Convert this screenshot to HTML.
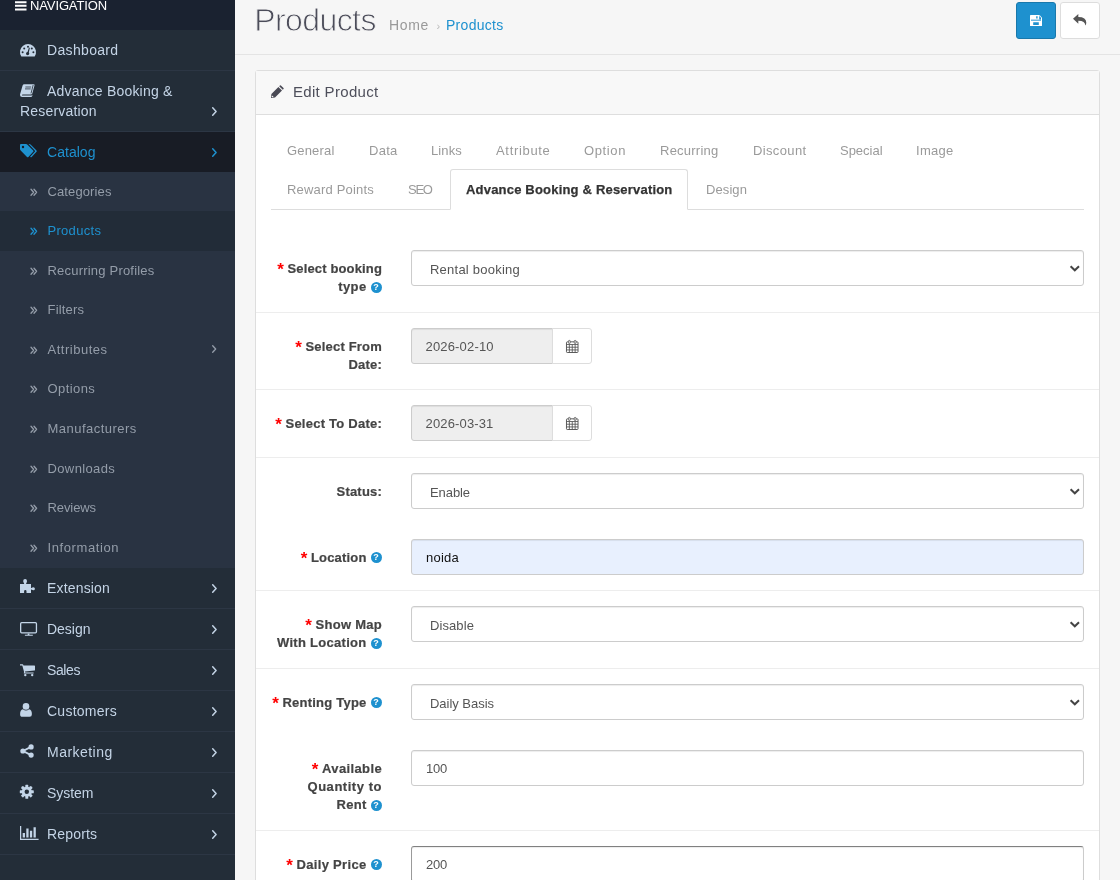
<!DOCTYPE html>
<html><head><meta charset="utf-8"><title>Products</title>
<style>
*{box-sizing:border-box;margin:0;padding:0}
html,body{width:1120px;height:880px;overflow:hidden;background:#f6f6f6;font-family:"Liberation Sans",sans-serif;font-size:13px;color:#666}
#side{position:absolute;left:0;top:0;width:235px;height:880px;background:#232d38;overflow:hidden}
#nav{position:absolute;left:0;top:0;width:235px;height:30px;background:#1a2230}
.mi{position:absolute;left:0;width:235px;border-bottom:1px solid #2c3644}
.act{background:#181c25;border-bottom-color:#181c25}
.sub{position:absolute;left:0;width:235px;background:#293342}
.subact{position:absolute;left:0;width:235px;background:#222c38}
svg{position:absolute;overflow:visible}
#wrap{position:absolute;left:0;top:0;width:1120px;height:880px;overflow:hidden;will-change:transform}
.abs{position:absolute}
.inp{position:absolute;border:1px solid #ccc;border-radius:3px;background:#fff;box-shadow:inset 0 1px 1px rgba(0,0,0,.075)}
.sep{position:absolute;left:256px;width:843px;height:1px;background:#ededed}
</style></head>
<body>
<div id="wrap">
<div id="side">
<div id="nav"></div>
<svg style="left:15px;top:0.5px" width="12" height="10" viewBox="0 0 12 10"><path d="M0 0.2h11.5v2H0zM0 3.8h11.5v2H0zM0 7.4h11.5v2H0z" fill="#fff"/></svg>
<div style="position:absolute;left:30px;top:-1.7px;font-size:13px;line-height:15px;color:#fff;font-weight:normal;white-space:nowrap;"><span style="letter-spacing:-0.125px;">NAVIGATION</span></div>
<div class="mi " style="top:30px;height:41px"></div>
<svg style="left:20px;top:43.6px" width="16" height="13" viewBox="0 0 16 13"><path d="M1.2 12.3 A8 8 0 1 1 14.8 12.3 Q14.6 12.6 14.2 12.6 H1.8 Q1.4 12.6 1.2 12.3Z" fill="#c3d5e8"/><g fill="#232d38"><circle cx="2.6" cy="8.2" r="1"/><circle cx="4.2" cy="4.4" r="1"/><circle cx="8" cy="2.8" r="1"/><circle cx="11.8" cy="4.4" r="1"/><circle cx="13.4" cy="8.2" r="1"/><circle cx="7.6" cy="9.6" r="1.6"/><path d="M7.2 9 L9 3.6 L9.8 3.9 L8.6 9.6Z"/></g></svg>
<div style="position:absolute;left:47px;top:42px;font-size:14px;line-height:16px;color:#c4d4e6;font-weight:normal;white-space:nowrap;"><span style="letter-spacing:0.333px;">Dashboard</span></div>
<div class="mi " style="top:71px;height:61px"></div>
<svg style="left:20px;top:84px" width="15" height="13" viewBox="0 0 15 13"><path d="M4.2 0.2 H13.6 Q14.9 0.2 14.5 1.6 L12.3 9.4 Q12 10.4 11 10.4 H2.8 Q1.9 10.4 1.9 11 Q1.9 11.6 2.8 11.6 H11.6 L12.6 10.6 L12.1 12.2 Q11.9 13 11 13 H2.2 Q0 13 0 10.9 Q0 10.3 0.3 9.5 L2.6 1.4 Q3 0.2 4.2 0.2Z" fill="#c3d5e8"/><path d="M5.4 3 H11.2 M5 4.9 H10.7 M13.2 0.9 L11 9.4" stroke="#232d38" stroke-width="0.8" fill="none"/></svg>
<div style="position:absolute;left:47px;top:82.7px;font-size:14px;line-height:16px;color:#c4d4e6;font-weight:normal;white-space:nowrap;"><span style="letter-spacing:0.194px;">Advance Booking &amp;</span></div>
<div style="position:absolute;left:20px;top:103px;font-size:14px;line-height:16px;color:#c4d4e6;font-weight:normal;white-space:nowrap;"><span style="letter-spacing:0.182px;">Reservation</span></div>
<svg style="left:212px;top:106.5px" width="5" height="9" viewBox="0 0 5 9"><path d="M0.7 0.7 L4.1 4.5 L0.7 8.3" fill="none" stroke="#c4d4e6" stroke-width="1.5" stroke-linecap="round" stroke-linejoin="round"/></svg>
<div class="mi act" style="top:132px;height:40px;border:0"></div>
<svg style="left:20px;top:144px" width="17" height="14" viewBox="0 0 17 14"><path d="M0 1 Q0 0 1 0 H6 Q6.8 0 7.5 0.7 L13.2 6.4 Q13.9 7.1 13.2 7.8 L8.4 12.9 Q7.7 13.6 7 12.9 L0.7 6.6 Q0 5.9 0 5Z" fill="#1e91cf"/><path d="M8.6 0 H9.3 Q10.1 0 10.8 0.7 L16.5 6.4 Q17.2 7.1 16.5 7.8 L11.7 12.9 Q11 13.6 10.3 12.9 L10.1 12.7 L14.7 7.8 Q15.4 7.1 14.7 6.4Z" fill="#1e91cf"/><circle cx="3" cy="3" r="1.2" fill="#181c25"/></svg>
<div style="position:absolute;left:47px;top:144px;font-size:14px;line-height:16px;color:#1e91cf;font-weight:normal;white-space:nowrap;"><span style="letter-spacing:0.033px;">Catalog</span></div>
<svg style="left:212px;top:147.5px" width="5" height="9" viewBox="0 0 5 9"><path d="M0.7 0.7 L4.1 4.5 L0.7 8.3" fill="none" stroke="#1e91cf" stroke-width="1.5" stroke-linecap="round" stroke-linejoin="round"/></svg>
<div class="sub" style="top:172px;height:396px"></div>
<div class="subact" style="top:211px;height:40px"></div>
<svg style="left:29.7px;top:187.8px" width="8" height="8" viewBox="0 0 8 8"><path d="M1 1.2 L3.6 4.2 L1 7.2 M4 1.2 L6.6 4.2 L4 7.2" fill="none" stroke="#949da9" stroke-width="1.3" stroke-linecap="round" stroke-linejoin="round"/></svg>
<div style="position:absolute;left:47.5px;top:184px;font-size:13px;line-height:15px;color:#949da9;font-weight:normal;white-space:nowrap;"><span style="letter-spacing:0.113px;">Categories</span></div>
<svg style="left:29.7px;top:226.8px" width="8" height="8" viewBox="0 0 8 8"><path d="M1 1.2 L3.6 4.2 L1 7.2 M4 1.2 L6.6 4.2 L4 7.2" fill="none" stroke="#1e91cf" stroke-width="1.3" stroke-linecap="round" stroke-linejoin="round"/></svg>
<div style="position:absolute;left:47.5px;top:223px;font-size:13px;line-height:15px;color:#1e91cf;font-weight:normal;white-space:nowrap;"><span style="letter-spacing:0.298px;">Products</span></div>
<svg style="left:29.7px;top:266.8px" width="8" height="8" viewBox="0 0 8 8"><path d="M1 1.2 L3.6 4.2 L1 7.2 M4 1.2 L6.6 4.2 L4 7.2" fill="none" stroke="#949da9" stroke-width="1.3" stroke-linecap="round" stroke-linejoin="round"/></svg>
<div style="position:absolute;left:47.5px;top:263px;font-size:13px;line-height:15px;color:#949da9;font-weight:normal;white-space:nowrap;"><span style="letter-spacing:0.204px;">Recurring Profiles</span></div>
<svg style="left:29.7px;top:305.8px" width="8" height="8" viewBox="0 0 8 8"><path d="M1 1.2 L3.6 4.2 L1 7.2 M4 1.2 L6.6 4.2 L4 7.2" fill="none" stroke="#949da9" stroke-width="1.3" stroke-linecap="round" stroke-linejoin="round"/></svg>
<div style="position:absolute;left:47.5px;top:302px;font-size:13px;line-height:15px;color:#949da9;font-weight:normal;white-space:nowrap;"><span style="letter-spacing:0.187px;">Filters</span></div>
<svg style="left:29.7px;top:345.8px" width="8" height="8" viewBox="0 0 8 8"><path d="M1 1.2 L3.6 4.2 L1 7.2 M4 1.2 L6.6 4.2 L4 7.2" fill="none" stroke="#949da9" stroke-width="1.3" stroke-linecap="round" stroke-linejoin="round"/></svg>
<div style="position:absolute;left:47.5px;top:342px;font-size:13px;line-height:15px;color:#949da9;font-weight:normal;white-space:nowrap;"><span style="letter-spacing:0.508px;">Attributes</span></div>
<svg style="left:29.7px;top:384.8px" width="8" height="8" viewBox="0 0 8 8"><path d="M1 1.2 L3.6 4.2 L1 7.2 M4 1.2 L6.6 4.2 L4 7.2" fill="none" stroke="#949da9" stroke-width="1.3" stroke-linecap="round" stroke-linejoin="round"/></svg>
<div style="position:absolute;left:47.5px;top:381px;font-size:13px;line-height:15px;color:#949da9;font-weight:normal;white-space:nowrap;"><span style="letter-spacing:0.413px;">Options</span></div>
<svg style="left:29.7px;top:424.8px" width="8" height="8" viewBox="0 0 8 8"><path d="M1 1.2 L3.6 4.2 L1 7.2 M4 1.2 L6.6 4.2 L4 7.2" fill="none" stroke="#949da9" stroke-width="1.3" stroke-linecap="round" stroke-linejoin="round"/></svg>
<div style="position:absolute;left:47.5px;top:421px;font-size:13px;line-height:15px;color:#949da9;font-weight:normal;white-space:nowrap;"><span style="letter-spacing:0.470px;">Manufacturers</span></div>
<svg style="left:29.7px;top:464.8px" width="8" height="8" viewBox="0 0 8 8"><path d="M1 1.2 L3.6 4.2 L1 7.2 M4 1.2 L6.6 4.2 L4 7.2" fill="none" stroke="#949da9" stroke-width="1.3" stroke-linecap="round" stroke-linejoin="round"/></svg>
<div style="position:absolute;left:47.5px;top:461px;font-size:13px;line-height:15px;color:#949da9;font-weight:normal;white-space:nowrap;"><span style="letter-spacing:0.375px;">Downloads</span></div>
<svg style="left:29.7px;top:503.8px" width="8" height="8" viewBox="0 0 8 8"><path d="M1 1.2 L3.6 4.2 L1 7.2 M4 1.2 L6.6 4.2 L4 7.2" fill="none" stroke="#949da9" stroke-width="1.3" stroke-linecap="round" stroke-linejoin="round"/></svg>
<div style="position:absolute;left:47.5px;top:500px;font-size:13px;line-height:15px;color:#949da9;font-weight:normal;white-space:nowrap;"><span style="letter-spacing:-0.089px;">Reviews</span></div>
<svg style="left:29.7px;top:543.8px" width="8" height="8" viewBox="0 0 8 8"><path d="M1 1.2 L3.6 4.2 L1 7.2 M4 1.2 L6.6 4.2 L4 7.2" fill="none" stroke="#949da9" stroke-width="1.3" stroke-linecap="round" stroke-linejoin="round"/></svg>
<div style="position:absolute;left:47.5px;top:540px;font-size:13px;line-height:15px;color:#949da9;font-weight:normal;white-space:nowrap;"><span style="letter-spacing:0.605px;">Information</span></div>
<svg style="left:212.3px;top:344.7px" width="4.6" height="8" viewBox="0 0 4.6 8"><path d="M0.7 0.7 L3.7 4 L0.7 7.3" fill="none" stroke="#949da9" stroke-width="1.3" stroke-linecap="round" stroke-linejoin="round"/></svg>
<div class="mi " style="top:568px;height:41px"></div>
<div style="position:absolute;left:47px;top:580px;font-size:14px;line-height:16px;color:#c4d4e6;font-weight:normal;white-space:nowrap;"><span style="letter-spacing:0.168px;">Extension</span></div>
<svg style="left:212px;top:583.5px" width="5" height="9" viewBox="0 0 5 9"><path d="M0.7 0.7 L4.1 4.5 L0.7 8.3" fill="none" stroke="#c4d4e6" stroke-width="1.5" stroke-linecap="round" stroke-linejoin="round"/></svg>
<div class="mi " style="top:609px;height:41px"></div>
<div style="position:absolute;left:47px;top:621px;font-size:14px;line-height:16px;color:#c4d4e6;font-weight:normal;white-space:nowrap;"><span style="letter-spacing:-0.016px;">Design</span></div>
<svg style="left:212px;top:624.5px" width="5" height="9" viewBox="0 0 5 9"><path d="M0.7 0.7 L4.1 4.5 L0.7 8.3" fill="none" stroke="#c4d4e6" stroke-width="1.5" stroke-linecap="round" stroke-linejoin="round"/></svg>
<div class="mi " style="top:650px;height:41px"></div>
<div style="position:absolute;left:47px;top:662px;font-size:14px;line-height:16px;color:#c4d4e6;font-weight:normal;white-space:nowrap;"><span style="letter-spacing:-0.406px;">Sales</span></div>
<svg style="left:212px;top:665.5px" width="5" height="9" viewBox="0 0 5 9"><path d="M0.7 0.7 L4.1 4.5 L0.7 8.3" fill="none" stroke="#c4d4e6" stroke-width="1.5" stroke-linecap="round" stroke-linejoin="round"/></svg>
<div class="mi " style="top:691px;height:41px"></div>
<div style="position:absolute;left:47px;top:703px;font-size:14px;line-height:16px;color:#c4d4e6;font-weight:normal;white-space:nowrap;"><span style="letter-spacing:0.257px;">Customers</span></div>
<svg style="left:212px;top:706.5px" width="5" height="9" viewBox="0 0 5 9"><path d="M0.7 0.7 L4.1 4.5 L0.7 8.3" fill="none" stroke="#c4d4e6" stroke-width="1.5" stroke-linecap="round" stroke-linejoin="round"/></svg>
<div class="mi " style="top:732px;height:41px"></div>
<div style="position:absolute;left:47px;top:744px;font-size:14px;line-height:16px;color:#c4d4e6;font-weight:normal;white-space:nowrap;"><span style="letter-spacing:0.470px;">Marketing</span></div>
<svg style="left:212px;top:747.5px" width="5" height="9" viewBox="0 0 5 9"><path d="M0.7 0.7 L4.1 4.5 L0.7 8.3" fill="none" stroke="#c4d4e6" stroke-width="1.5" stroke-linecap="round" stroke-linejoin="round"/></svg>
<div class="mi " style="top:773px;height:41px"></div>
<div style="position:absolute;left:47px;top:785px;font-size:14px;line-height:16px;color:#c4d4e6;font-weight:normal;white-space:nowrap;"><span style="letter-spacing:-0.031px;">System</span></div>
<svg style="left:212px;top:788.5px" width="5" height="9" viewBox="0 0 5 9"><path d="M0.7 0.7 L4.1 4.5 L0.7 8.3" fill="none" stroke="#c4d4e6" stroke-width="1.5" stroke-linecap="round" stroke-linejoin="round"/></svg>
<div class="mi " style="top:814px;height:41px"></div>
<div style="position:absolute;left:47px;top:826px;font-size:14px;line-height:16px;color:#c4d4e6;font-weight:normal;white-space:nowrap;"><span style="letter-spacing:0.167px;">Reports</span></div>
<svg style="left:212px;top:829.5px" width="5" height="9" viewBox="0 0 5 9"><path d="M0.7 0.7 L4.1 4.5 L0.7 8.3" fill="none" stroke="#c4d4e6" stroke-width="1.5" stroke-linecap="round" stroke-linejoin="round"/></svg>
<svg style="left:20px;top:579px" width="15" height="14" viewBox="0 0 15 14"><path d="M0 5 H3.9 Q4.3 5 4.1 4.2 Q3.2 3.2 3.2 2 A1.9 1.9 0 0 1 7 2 Q7 3.2 6.2 4.2 Q6 5 6.4 5 H11 V8.6 Q11 9.2 11.6 9.1 Q12.2 8.3 13.4 8.3 A1.5 1.5 0 0 1 13.4 11.3 Q12.2 11.3 11.6 10.5 Q11 10.4 11 11 V14 H6.5 V12.2 A1.2 1.2 0 0 0 4.1 12.2 V14 H0Z" fill="#c3d5e8"/></svg>
<svg style="left:20px;top:621.5px" width="18" height="14" viewBox="0 0 18 14"><rect x="0.65" y="0.65" width="15.8" height="10.2" rx="1" fill="none" stroke="#c3d5e8" stroke-width="1.3"/><path d="M7.7 11.4 H9.4 V12.7 H12.8 V13.7 H4.9 V12.7 H7.7Z" fill="#c3d5e8"/></svg>
<svg style="left:20px;top:663.5px" width="15" height="13" viewBox="0 0 15 13"><path d="M0 0.3 H2.6 Q3.2 0.3 3.3 0.9 L3.5 1.5 H14.4 Q15 1.5 15 2.1 V6 Q15 6.5 14.4 6.6 L5 7.6 L5.2 8.4 H13.6 V9.5 H4.2 Q3.7 9.5 3.8 8.9 L4.1 8 L2.3 1.4 H0Z" fill="#c3d5e8"/><circle cx="5.3" cy="11.1" r="1.2" fill="#c3d5e8"/><circle cx="12.2" cy="11.1" r="1.2" fill="#c3d5e8"/></svg>
<svg style="left:20px;top:703.1px" width="12" height="14" viewBox="0 0 12 14"><circle cx="6" cy="3.4" r="3.3" fill="#c3d5e8"/><path d="M2.9 6.2 Q6 8.6 9.1 6.2 Q11.9 6.6 11.9 11.2 Q11.9 13.8 9.6 13.8 H2.4 Q0.1 13.8 0.1 11.2 Q0.1 6.6 2.9 6.2Z" fill="#c3d5e8"/></svg>
<svg style="left:20px;top:744.2px" width="14" height="14" viewBox="0 0 14 14"><path d="M3 7 L11 2.8 M3 7 L11 11.2" stroke="#c3d5e8" stroke-width="1.9" fill="none"/><circle cx="2.9" cy="7" r="2.6" fill="#c3d5e8"/><circle cx="11.1" cy="2.9" r="2.6" fill="#c3d5e8"/><circle cx="11.1" cy="11.1" r="2.6" fill="#c3d5e8"/></svg>
<svg style="left:20px;top:785.3px" width="13.6" height="13.6" viewBox="0 0 14 14"><rect x="5.5" y="-0.2" width="3" height="14.4" rx="0.6" transform="rotate(0 7 7)" fill="#c3d5e8"/><rect x="5.5" y="-0.2" width="3" height="14.4" rx="0.6" transform="rotate(45 7 7)" fill="#c3d5e8"/><rect x="5.5" y="-0.2" width="3" height="14.4" rx="0.6" transform="rotate(90 7 7)" fill="#c3d5e8"/><rect x="5.5" y="-0.2" width="3" height="14.4" rx="0.6" transform="rotate(135 7 7)" fill="#c3d5e8"/><circle cx="7" cy="7" r="5.2" fill="#c3d5e8"/><circle cx="7" cy="7" r="2.3" fill="#232d38"/></svg>
<svg style="left:20px;top:826.2px" width="18.6" height="14" viewBox="0 0 18 14" preserveAspectRatio="none"><path d="M0 0 H1.2 V12.8 H18 V14 H0Z M2.6 7 H4.8 V11.6 H2.6Z M6.1 2.4 H8.3 V11.6 H6.1Z M9.6 4.8 H11.8 V11.6 H9.6Z M13.1 1.2 H15.3 V11.6 H13.1Z" fill="#c3d5e8"/></svg>
</div>
<div class="abs" style="left:235px;top:54px;width:885px;height:1px;background:#e4e4e4"></div>
<div style="position:absolute;left:254.3px;top:1.9px;font-size:32px;line-height:36px;color:#4c4d5a;font-weight:normal;white-space:nowrap;-webkit-text-stroke:0.9px #f6f6f6;"><span style="letter-spacing:-0.598px;">Products</span></div>
<div style="position:absolute;left:389px;top:16.7px;font-size:14px;line-height:16px;color:#999;font-weight:normal;white-space:nowrap;"><span style="letter-spacing:0.660px;">Home</span></div>
<div style="position:absolute;left:436.5px;top:19.7px;font-size:11px;line-height:12px;color:#bbb;font-weight:normal;white-space:nowrap;"><span>›</span></div>
<div style="position:absolute;left:446px;top:16.7px;font-size:14px;line-height:16px;color:#1e91cf;font-weight:normal;white-space:nowrap;"><span style="letter-spacing:0.281px;">Products</span></div>
<div class="abs" style="left:1016px;top:2px;width:40px;height:37px;background:#1e91cf;border:1px solid #1978ab;border-radius:3px"></div>
<svg style="left:1030px;top:15.1px" width="12" height="11" viewBox="0 0 12 11" preserveAspectRatio="none"><path d="M0.6 0 H9 Q9.4 0 9.8 0.4 L11.6 2.2 Q12 2.6 12 3 V10.4 Q12 11 11.4 11 H0.6 Q0 11 0 10.4 V0.6 Q0 0 0.6 0Z" fill="#fff"/><path d="M6.2 1.2 H7.6 V3.6 H6.2Z M3.2 7.2 H8.8 V10 H3.2Z M9.2 1 H9.3 L11 2.7 V4.5 H9.2Z" fill="#1e91cf"/><path d="M1 4.5 H11 V6 H1Z" fill="#1e91cf" opacity="0.65"/></svg>
<div class="abs" style="left:1060px;top:2px;width:40px;height:37px;background:#fff;border:1px solid #ddd;border-radius:3px"></div>
<svg style="left:1073.1px;top:14.4px" width="13.3" height="11.6" viewBox="0 0 14 12" preserveAspectRatio="none"><path d="M5.6 0 V3 Q14 3 14 9 Q14 10.6 12.9 12 Q13 7 5.6 7 V10 L0 5Z" fill="#555"/></svg>
<div class="abs" style="left:255px;top:70px;width:845px;height:830px;background:#fff;border:1px solid #dedede;border-radius:3px"></div>
<div class="abs" style="left:256px;top:71px;width:843px;height:44px;background:#f8f8f8;border-bottom:1px solid #dedede"></div>
<svg style="left:271px;top:84.5px" width="13" height="13" viewBox="0 0 13 13"><path d="M0 13 L0.4 9 L7.4 2 L11 5.6 L4 12.6Z M8.2 1.2 L8.9 0.5 Q9.4 0 9.9 0.5 L12.5 3.1 Q13 3.6 12.5 4.1 L11.8 4.8Z" fill="#4a4a55"/><circle cx="1.5" cy="11.5" r="0.8" fill="#f8f8f8"/></svg>
<div style="position:absolute;left:293px;top:82.7px;font-size:15px;line-height:17px;color:#4e4f5b;font-weight:normal;white-space:nowrap;"><span style="letter-spacing:0.315px;">Edit Product</span></div>
<div style="position:absolute;left:287px;top:142.7px;font-size:13px;line-height:15px;color:#9a9a9a;font-weight:normal;white-space:nowrap;"><span style="letter-spacing:0.179px;">General</span></div>
<div style="position:absolute;left:369px;top:142.7px;font-size:13px;line-height:15px;color:#9a9a9a;font-weight:normal;white-space:nowrap;"><span style="letter-spacing:0.258px;">Data</span></div>
<div style="position:absolute;left:431px;top:142.7px;font-size:13px;line-height:15px;color:#9a9a9a;font-weight:normal;white-space:nowrap;"><span style="letter-spacing:0.128px;">Links</span></div>
<div style="position:absolute;left:496px;top:142.7px;font-size:13px;line-height:15px;color:#9a9a9a;font-weight:normal;white-space:nowrap;"><span style="letter-spacing:0.675px;">Attribute</span></div>
<div style="position:absolute;left:584px;top:142.7px;font-size:13px;line-height:15px;color:#9a9a9a;font-weight:normal;white-space:nowrap;"><span style="letter-spacing:0.615px;">Option</span></div>
<div style="position:absolute;left:660px;top:142.7px;font-size:13px;line-height:15px;color:#9a9a9a;font-weight:normal;white-space:nowrap;"><span style="letter-spacing:0.238px;">Recurring</span></div>
<div style="position:absolute;left:753px;top:142.7px;font-size:13px;line-height:15px;color:#9a9a9a;font-weight:normal;white-space:nowrap;"><span style="letter-spacing:0.365px;">Discount</span></div>
<div style="position:absolute;left:840px;top:142.7px;font-size:13px;line-height:15px;color:#9a9a9a;font-weight:normal;white-space:nowrap;"><span style="letter-spacing:-0.020px;">Special</span></div>
<div style="position:absolute;left:916px;top:142.7px;font-size:13px;line-height:15px;color:#9a9a9a;font-weight:normal;white-space:nowrap;"><span style="letter-spacing:0.272px;">Image</span></div>
<div style="position:absolute;left:287px;top:181.7px;font-size:13px;line-height:15px;color:#9a9a9a;font-weight:normal;white-space:nowrap;"><span style="letter-spacing:0.189px;">Reward Points</span></div>
<div style="position:absolute;left:408px;top:181.7px;font-size:13px;line-height:15px;color:#9a9a9a;font-weight:normal;white-space:nowrap;"><span style="letter-spacing:-1.256px;">SEO</span></div>
<div style="position:absolute;left:706px;top:181.7px;font-size:13px;line-height:15px;color:#9a9a9a;font-weight:normal;white-space:nowrap;"><span style="letter-spacing:0.089px;">Design</span></div>
<div class="abs" style="left:271px;top:209px;width:813px;height:1px;background:#ddd"></div>
<div class="abs" style="left:450px;top:169px;width:238px;height:41px;background:#fff;border:1px solid #ddd;border-bottom-color:#fff;border-radius:3px 3px 0 0"></div>
<div style="position:absolute;left:466px;top:181.7px;font-size:13px;line-height:15px;color:#333;font-weight:bold;white-space:nowrap;-webkit-text-stroke:0.25px #333;"><span style="letter-spacing:0.196px;">Advance Booking &amp; Reservation</span></div>
<div style="position:absolute;right:738px;top:260.6px;font-size:13px;line-height:15px;color:#444;font-weight:bold;white-space:nowrap;-webkit-text-stroke:0.2px #444"><span style="color:#f00;font-size:17px;line-height:0;position:relative;top:2px;-webkit-text-stroke:0;margin-right:3.7px;vertical-align:baseline">*</span><span style="letter-spacing:0.145px;">Select booking</span></div><div style="position:absolute;right:753.5px;top:279px;font-size:13px;line-height:15px;color:#444;font-weight:bold;white-space:nowrap;-webkit-text-stroke:0.2px #444"><span style="letter-spacing:0.391px;">type</span></div><div style="position:absolute;left:370.5px;top:281.5px;width:11px;height:11px;border-radius:50%;background:#1e91cf;color:#fff;font-size:9px;font-weight:bold;line-height:11px;text-align:center">?</div>
<div class="inp" style="left:411px;top:250px;width:673px;height:36px;background:#fff;border-radius:3px;"></div>
<div style="position:absolute;left:430px;top:261.7px;font-size:13px;line-height:15px;color:#555;font-weight:normal;white-space:nowrap;"><span style="letter-spacing:0.233px;">Rental booking</span></div>
<svg style="left:1069px;top:264.5px" width="11" height="7" viewBox="0 0 11 7"><path d="M1.6 1.3 L5.8 5.3 L10 1.3" fill="none" stroke="#444" stroke-width="2"/></svg>
<div class="sep" style="top:312px"></div>
<div style="position:absolute;right:738px;top:338.6px;font-size:13px;line-height:15px;color:#444;font-weight:bold;white-space:nowrap;-webkit-text-stroke:0.2px #444"><span style="color:#f00;font-size:17px;line-height:0;position:relative;top:2px;-webkit-text-stroke:0;margin-right:3.7px;vertical-align:baseline">*</span><span style="letter-spacing:0.189px;">Select From</span></div><div style="position:absolute;right:738px;top:357px;font-size:13px;line-height:15px;color:#444;font-weight:bold;white-space:nowrap;-webkit-text-stroke:0.2px #444"><span style="letter-spacing:0.197px;">Date:</span></div>
<div class="inp" style="left:411px;top:328px;width:142px;height:36px;background:#eee;border-radius:3px 0 0 3px;"></div>
<div style="position:absolute;left:425.5px;top:339px;font-size:13px;line-height:15px;color:#555;font-weight:normal;white-space:nowrap;"><span style="letter-spacing:0.170px;">2026-02-10</span></div>
<div class="abs" style="left:552px;top:328px;width:40px;height:36px;background:#fff;border:1px solid #ddd;border-radius:0 3px 3px 0"></div>
<svg style="left:565.5px;top:339.5px" width="12.5" height="13" viewBox="0 0 13 13.5"><rect x="0.5" y="1.9" width="12" height="11.1" rx="0.8" fill="#fff" stroke="#555" stroke-width="1"/><path d="M0.5 4.7 H12.5 M0.5 7.5 H12.5 M0.5 10.3 H12.5 M3.5 4.7 V13 M6.5 4.7 V13 M9.5 4.7 V13" stroke="#555" stroke-width="0.9" fill="none"/><rect x="2.5" y="0.4" width="2" height="3.2" rx="0.9" fill="#ddd" stroke="#555" stroke-width="0.8"/><rect x="8.5" y="0.4" width="2" height="3.2" rx="0.9" fill="#ddd" stroke="#555" stroke-width="0.8"/></svg>
<div class="sep" style="top:389px"></div>
<div style="position:absolute;right:738px;top:415.7px;font-size:13px;line-height:15px;color:#444;font-weight:bold;white-space:nowrap;-webkit-text-stroke:0.2px #444"><span style="color:#f00;font-size:17px;line-height:0;position:relative;top:2px;-webkit-text-stroke:0;margin-right:3.7px;vertical-align:baseline">*</span><span style="letter-spacing:0.236px;">Select To Date:</span></div>
<div class="inp" style="left:411px;top:405px;width:142px;height:36px;background:#eee;border-radius:3px 0 0 3px;"></div>
<div style="position:absolute;left:425.5px;top:416px;font-size:13px;line-height:15px;color:#555;font-weight:normal;white-space:nowrap;"><span style="letter-spacing:0.150px;">2026-03-31</span></div>
<div class="abs" style="left:552px;top:405px;width:40px;height:36px;background:#fff;border:1px solid #ddd;border-radius:0 3px 3px 0"></div>
<svg style="left:565.5px;top:416.5px" width="12.5" height="13" viewBox="0 0 13 13.5"><rect x="0.5" y="1.9" width="12" height="11.1" rx="0.8" fill="#fff" stroke="#555" stroke-width="1"/><path d="M0.5 4.7 H12.5 M0.5 7.5 H12.5 M0.5 10.3 H12.5 M3.5 4.7 V13 M6.5 4.7 V13 M9.5 4.7 V13" stroke="#555" stroke-width="0.9" fill="none"/><rect x="2.5" y="0.4" width="2" height="3.2" rx="0.9" fill="#ddd" stroke="#555" stroke-width="0.8"/><rect x="8.5" y="0.4" width="2" height="3.2" rx="0.9" fill="#ddd" stroke="#555" stroke-width="0.8"/></svg>
<div class="sep" style="top:457px"></div>
<div style="position:absolute;right:738px;top:483.7px;font-size:13px;line-height:15px;color:#444;font-weight:bold;white-space:nowrap;-webkit-text-stroke:0.2px #444"><span style="letter-spacing:0.205px;">Status:</span></div>
<div class="inp" style="left:411px;top:473px;width:673px;height:36px;background:#fff;border-radius:3px;"></div>
<div style="position:absolute;left:430px;top:484.7px;font-size:13px;line-height:15px;color:#555;font-weight:normal;white-space:nowrap;"><span style="letter-spacing:-0.081px;">Enable</span></div>
<svg style="left:1069px;top:487.5px" width="11" height="7" viewBox="0 0 11 7"><path d="M1.6 1.3 L5.8 5.3 L10 1.3" fill="none" stroke="#444" stroke-width="2"/></svg>
<div style="position:absolute;right:753.5px;top:549.7px;font-size:13px;line-height:15px;color:#444;font-weight:bold;white-space:nowrap;-webkit-text-stroke:0.2px #444"><span style="color:#f00;font-size:17px;line-height:0;position:relative;top:2px;-webkit-text-stroke:0;margin-right:3.7px;vertical-align:baseline">*</span><span style="letter-spacing:0.166px;">Location</span></div><div style="position:absolute;left:370.5px;top:552.2px;width:11px;height:11px;border-radius:50%;background:#1e91cf;color:#fff;font-size:9px;font-weight:bold;line-height:11px;text-align:center">?</div>
<div class="inp" style="left:411px;top:539px;width:673px;height:36px;background:#e8f0fe;border-radius:3px;"></div>
<div style="position:absolute;left:426px;top:550px;font-size:13px;line-height:15px;color:#111;font-weight:normal;white-space:nowrap;"><span style="letter-spacing:0.237px;">noida</span></div>
<div class="sep" style="top:590px"></div>
<div style="position:absolute;right:738px;top:616.6px;font-size:13px;line-height:15px;color:#444;font-weight:bold;white-space:nowrap;-webkit-text-stroke:0.2px #444"><span style="color:#f00;font-size:17px;line-height:0;position:relative;top:2px;-webkit-text-stroke:0;margin-right:3.7px;vertical-align:baseline">*</span><span style="letter-spacing:0.277px;">Show Map</span></div><div style="position:absolute;right:753.5px;top:635px;font-size:13px;line-height:15px;color:#444;font-weight:bold;white-space:nowrap;-webkit-text-stroke:0.2px #444"><span style="letter-spacing:0.282px;">With Location</span></div><div style="position:absolute;left:370.5px;top:637.5px;width:11px;height:11px;border-radius:50%;background:#1e91cf;color:#fff;font-size:9px;font-weight:bold;line-height:11px;text-align:center">?</div>
<div class="inp" style="left:411px;top:606px;width:673px;height:36px;background:#fff;border-radius:3px;"></div>
<div style="position:absolute;left:430px;top:617.7px;font-size:13px;line-height:15px;color:#555;font-weight:normal;white-space:nowrap;"><span style="letter-spacing:0.092px;">Disable</span></div>
<svg style="left:1069px;top:620.5px" width="11" height="7" viewBox="0 0 11 7"><path d="M1.6 1.3 L5.8 5.3 L10 1.3" fill="none" stroke="#444" stroke-width="2"/></svg>
<div class="sep" style="top:668px"></div>
<div style="position:absolute;right:753.5px;top:694.7px;font-size:13px;line-height:15px;color:#444;font-weight:bold;white-space:nowrap;-webkit-text-stroke:0.2px #444"><span style="color:#f00;font-size:17px;line-height:0;position:relative;top:2px;-webkit-text-stroke:0;margin-right:3.7px;vertical-align:baseline">*</span><span style="letter-spacing:0.219px;">Renting Type</span></div><div style="position:absolute;left:370.5px;top:697.2px;width:11px;height:11px;border-radius:50%;background:#1e91cf;color:#fff;font-size:9px;font-weight:bold;line-height:11px;text-align:center">?</div>
<div class="inp" style="left:411px;top:684px;width:673px;height:36px;background:#fff;border-radius:3px;"></div>
<div style="position:absolute;left:430px;top:695.7px;font-size:13px;line-height:15px;color:#555;font-weight:normal;white-space:nowrap;"><span style="letter-spacing:-0.027px;">Daily Basis</span></div>
<svg style="left:1069px;top:698.5px" width="11" height="7" viewBox="0 0 11 7"><path d="M1.6 1.3 L5.8 5.3 L10 1.3" fill="none" stroke="#444" stroke-width="2"/></svg>
<div style="position:absolute;right:738px;top:760.6px;font-size:13px;line-height:15px;color:#444;font-weight:bold;white-space:nowrap;-webkit-text-stroke:0.2px #444"><span style="color:#f00;font-size:17px;line-height:0;position:relative;top:2px;-webkit-text-stroke:0;margin-right:3.7px;vertical-align:baseline">*</span><span style="letter-spacing:0.377px;">Available</span></div><div style="position:absolute;right:738px;top:779px;font-size:13px;line-height:15px;color:#444;font-weight:bold;white-space:nowrap;-webkit-text-stroke:0.2px #444"><span style="letter-spacing:0.536px;">Quantity to</span></div><div style="position:absolute;right:753.5px;top:797.4px;font-size:13px;line-height:15px;color:#444;font-weight:bold;white-space:nowrap;-webkit-text-stroke:0.2px #444"><span style="letter-spacing:0.277px;">Rent</span></div><div style="position:absolute;left:370.5px;top:799.9px;width:11px;height:11px;border-radius:50%;background:#1e91cf;color:#fff;font-size:9px;font-weight:bold;line-height:11px;text-align:center">?</div>
<div class="inp" style="left:411px;top:750px;width:673px;height:36px;background:#fff;border-radius:3px;"></div>
<div style="position:absolute;left:426px;top:761px;font-size:13px;line-height:15px;color:#555;font-weight:normal;white-space:nowrap;"><span style="letter-spacing:-0.234px;">100</span></div>
<div class="sep" style="top:830px"></div>
<div style="position:absolute;right:753.5px;top:856.7px;font-size:13px;line-height:15px;color:#444;font-weight:bold;white-space:nowrap;-webkit-text-stroke:0.2px #444"><span style="color:#f00;font-size:17px;line-height:0;position:relative;top:2px;-webkit-text-stroke:0;margin-right:3.7px;vertical-align:baseline">*</span><span style="letter-spacing:0.318px;">Daily Price</span></div><div style="position:absolute;left:370.5px;top:859.2px;width:11px;height:11px;border-radius:50%;background:#1e91cf;color:#fff;font-size:9px;font-weight:bold;line-height:11px;text-align:center">?</div>
<div class="inp" style="left:411px;top:846px;width:673px;height:36px;background:#fff;border-radius:3px;border-top-color:#808080;border-left-color:#9a9a9a;"></div>
<div style="position:absolute;left:426px;top:857px;font-size:13px;line-height:15px;color:#555;font-weight:normal;white-space:nowrap;"><span style="letter-spacing:-0.234px;">200</span></div>
</div>
</body></html>
